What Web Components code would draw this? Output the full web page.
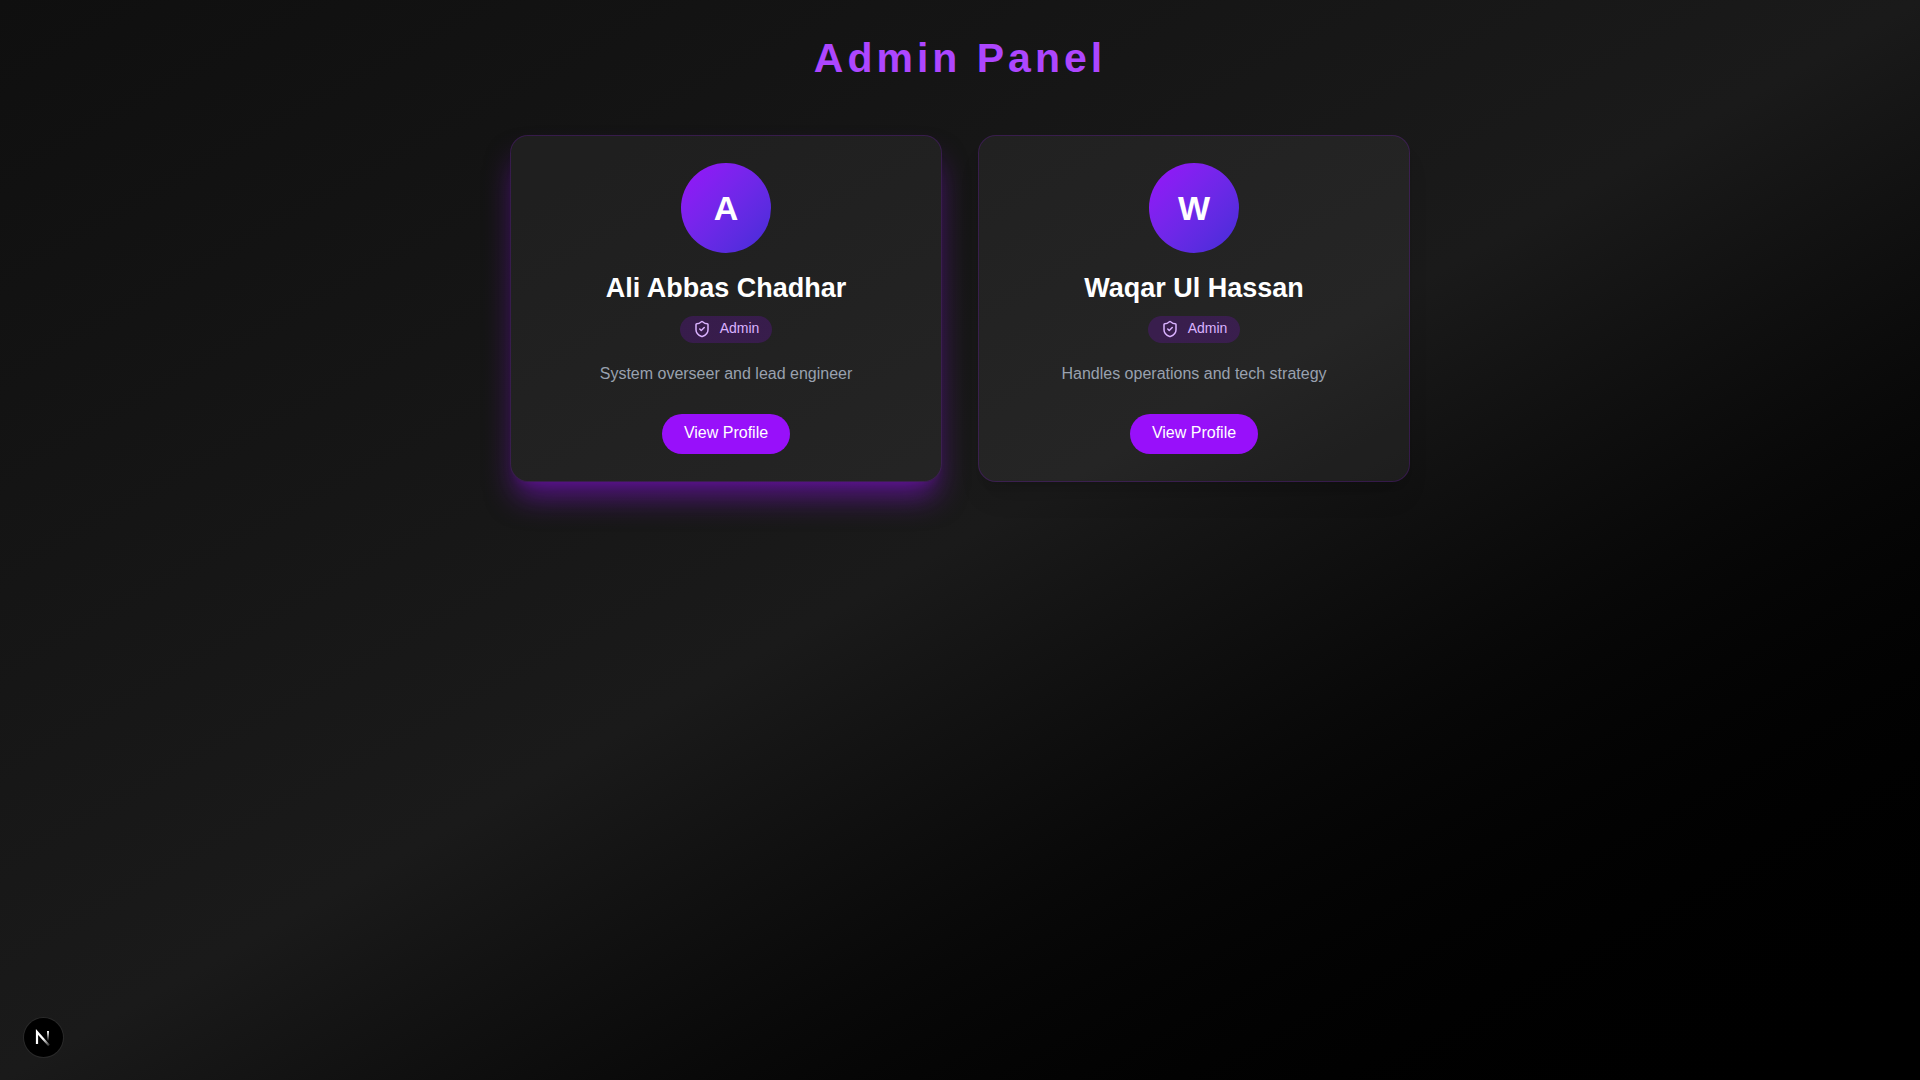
<!DOCTYPE html>
<html lang="en">
<head>
<meta charset="utf-8">
<title>Admin Panel</title>
<style>
  html { height: 100%; }
  body {
    margin: 0;
    min-height: 100%;
    background: #000;
    color: #fff;
    font-family: "Liberation Sans", Arial, sans-serif;
    font-size: 18px;
    line-height: 27px;
  }
</style>
</head>
<body>
<admin-page heading="Admin Panel">
  <admin-card name="Ali Abbas Chadhar" role-name="Admin" active>System overseer and lead engineer</admin-card>
  <admin-card name="Waqar Ul Hassan" role-name="Admin">Handles operations and tech strategy</admin-card>
</admin-page>
<dev-indicator></dev-indicator>

<template id="admin-page">
  <style>
    :host {
      display: block;
      box-sizing: border-box;
      min-height: 100vh;
      padding: 36px;
      background: linear-gradient(to bottom right in oklab, #0f0f0f, #1a1a1a, #000);
    }
    h1 {
      margin: 0 0 54px;
      font-size: 41px;
      line-height: 45px;
      font-weight: 700;
      letter-spacing: 4px;
      text-align: center;
      color: #ad46ff;
    }
    main {
      display: grid;
      grid-template-columns: repeat(auto-fit, minmax(300px, 1fr));
      gap: 36px;
      max-width: 900px;
      margin: 0 auto;
    }
  </style>
  <h1></h1>
  <main><slot></slot></main>
</template>

<template id="admin-card">
  <style>
    :host {
      display: flex;
      flex-direction: column;
      align-items: center;
      box-sizing: border-box;
      padding: 27px;
      border: 1px solid rgba(152, 16, 250, 0.2);
      border-radius: 18px;
      background: rgba(255, 255, 255, 0.05);
      box-shadow: 0 20px 25px -5px rgba(0, 0, 0, 0.1), 0 8px 10px -6px rgba(0, 0, 0, 0.1);
      text-align: center;
    }
    :host([active]) {
      box-shadow: 0 20px 30px -6px rgba(152, 16, 250, 0.5), 0 8px 10px -6px rgba(152, 16, 250, 0.15);
    }
    .avatar {
      display: flex;
      align-items: center;
      justify-content: center;
      width: 90px;
      height: 90px;
      margin-bottom: 18px;
      border-radius: 50%;
      background: linear-gradient(to bottom right in oklab, #9810fa, #432dd7);
      font-size: 34px;
      line-height: 40px;
      font-weight: 700;
    }
    h2 {
      margin: 0 0 11px;
      font-size: 27px;
      line-height: 34px;
      font-weight: 700;
    }
    badge-pill { margin-bottom: 18px; }
    p {
      margin: 0 0 28px;
      font-size: 16px;
      line-height: 25px;
      color: #99a1af;
    }
    button {
      padding: 8px 22px 10px;
      border: 0;
      border-radius: 20px;
      background: #9810fa;
      color: #fff;
      font: inherit;
      font-size: 16px;
      line-height: 22px;
      cursor: pointer;
    }
  </style>
  <div class="avatar"></div>
  <h2></h2>
  <badge-pill></badge-pill>
  <p><slot></slot></p>
  <button type="button">View Profile</button>
</template>

<template id="badge-pill">
  <style>
    :host {
      display: inline-flex;
      align-items: center;
      gap: 9px;
      box-sizing: border-box;
      height: 27px;
      padding: 0 13px 1px;
      border-radius: 14px;
      background: rgba(89, 22, 139, 0.4);
      color: #dab2ff;
      font-size: 14px;
      line-height: 18px;
    }
    svg { display: block; }
    span { padding-bottom: 2px; }
  </style>
  <svg width="18" height="18" viewBox="0 0 24 24" fill="none" stroke="currentColor" stroke-width="2" stroke-linecap="round" stroke-linejoin="round" aria-hidden="true">
    <path d="M20 13c0 5-3.500 7.500-7.660 8.950a1 1 0 0 1-.67-.01C7.500 20.500 4 18 4 13V6a1 1 0 0 1 1-1c2 0 4.500-1.200 6.240-2.720a1.170 1.170 0 0 1 1.520 0C14.510 3.810 17 5 19 5a1 1 0 0 1 1 1z"/>
    <path d="m9 12 2 2 4-4"/>
  </svg>
  <span><slot></slot></span>
</template>

<template id="dev-indicator">
  <style>
    :host { position: fixed; left: 24px; bottom: 23px; }
    button {
      display: flex;
      align-items: center;
      justify-content: center;
      width: 39px;
      height: 39px;
      padding: 0;
      border: 0;
      border-radius: 50%;
      background: #000;
      box-shadow: 0 0 0 1px #2a2a2a;
      cursor: pointer;
    }
  </style>
  <button type="button" aria-label="Open developer tools">
    <svg width="39" height="39" viewBox="0 0 39 39" fill="none" aria-hidden="true">
      <defs>
        <linearGradient id="stem" x1="24" y1="13" x2="24" y2="23" gradientUnits="userSpaceOnUse">
          <stop stop-color="#fff"/><stop offset="1" stop-color="#fff" stop-opacity="0"/>
        </linearGradient>
        <linearGradient id="slash" x1="20" y1="20" x2="26" y2="28" gradientUnits="userSpaceOnUse">
          <stop stop-color="#fff"/><stop offset="1" stop-color="#fff" stop-opacity="0.1"/>
        </linearGradient>
      </defs>
      <path d="M13 26V14L25 27.500" stroke="url(#slash)" stroke-width="2.200"/>
      <path d="M24 13V23" stroke="url(#stem)" stroke-width="2"/>
    </svg>
  </button>
</template>

<script>
  class TemplateElement extends HTMLElement {
    constructor() {
      super();
      const template = document.getElementById(this.localName);
      this.attachShadow({ mode: "open" }).append(template.content.cloneNode(true));
    }
    find(selector) { return this.shadowRoot.querySelector(selector); }
  }

  customElements.define("badge-pill", class extends TemplateElement {});

  customElements.define("admin-card", class extends TemplateElement {
    connectedCallback() {
      const name = this.getAttribute("name");
      this.find(".avatar").textContent = name.charAt(0);
      this.find("h2").textContent = name;
      this.find("badge-pill").textContent = this.getAttribute("role-name");
    }
  });

  customElements.define("admin-page", class extends TemplateElement {
    connectedCallback() {
      this.find("h1").textContent = this.getAttribute("heading");
    }
  });

  customElements.define("dev-indicator", class extends TemplateElement {});
</script>
</body>
</html>
